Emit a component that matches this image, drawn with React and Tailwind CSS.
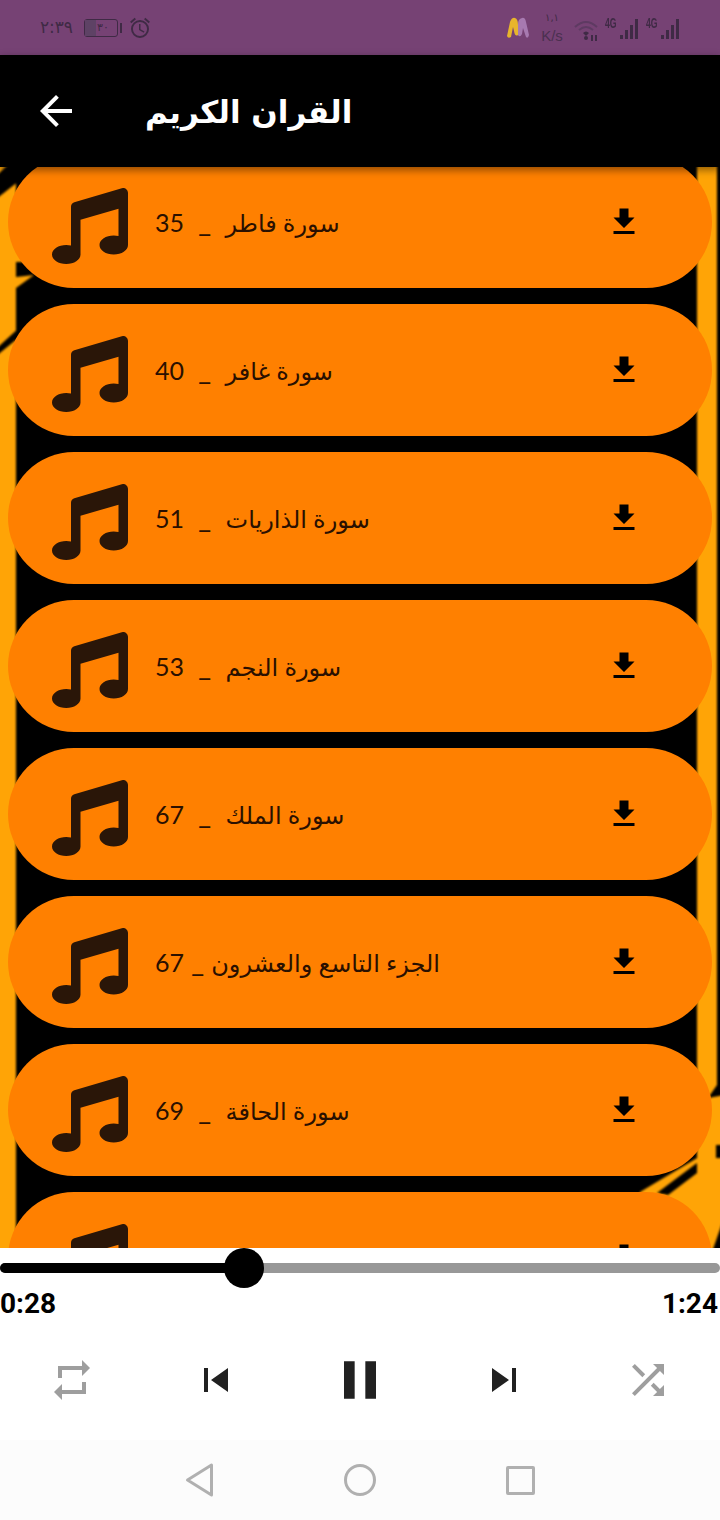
import React from "react";
import { FaMusic } from "react-icons/fa";
import { MdOutlineAlarm } from "react-icons/md";

const rows = [
  { name: "سورة فاطر", sep: "  _  ", num: "35" },
  { name: "سورة غافر", sep: "  _  ", num: "40" },
  { name: "سورة الذاريات", sep: "  _  ", num: "51" },
  { name: "سورة النجم", sep: "  _  ", num: "53" },
  { name: "سورة الملك", sep: "  _  ", num: "67" },
  { name: "الجزء التاسع والعشرون", sep: " _ ", num: "67" },
  { name: "سورة الحاقة", sep: "  _  ", num: "69" },
  {},
];

const Icon = ({ d, size = 48, className = "" }) => (
  <svg width={size} height={size} viewBox="0 0 24 24" fill="currentColor" className={className}>
    <path d={d} />
  </svg>
);

const Signal = () => (
  <div className="relative w-[33px] h-[22px]">
    <span className="absolute left-0 -top-[1px] text-[14px] leading-[14px] font-bold font-['Liberation_Sans',sans-serif] scale-x-[0.62] origin-left">4G</span>
    <div className="absolute right-0 bottom-0 flex items-end gap-[2px]">
      <div className="w-[3px] h-[4px] bg-[#3f2a45]" />
      <div className="w-[3px] h-[9px] bg-[#3f2a45]" />
      <div className="w-[3px] h-[14px] bg-[#3f2a45]" />
      <div className="w-[3px] h-[20px] bg-[#3f2a45]" />
    </div>
  </div>
);

const StatusBar = () => (
  <div className="h-[55px] shrink-0 bg-[#764274] flex items-center justify-between pl-[39px] pr-[41px] text-[#3f2a45]">
    <div className="flex items-center">
      <span dir="rtl" className="w-[34px] text-[17px] font-['DejaVu_Sans',sans-serif]">٢:٣٩</span>
      <div className="ml-[11px] flex items-center">
        <div className="relative w-[34px] h-[18px] rounded-[3px] border border-[#3f2a45] flex items-center justify-center pl-[4px]">
          <div className="absolute left-0 top-0 bottom-0 w-[11px] bg-[#5e4265]" />
          <span className="text-[11px] leading-none font-['DejaVu_Sans',sans-serif]">٣٠</span>
        </div>
        <div className="ml-[2px] w-[2px] h-[10px] bg-[#3f2a45]" />
      </div>
      <MdOutlineAlarm size={24} className="ml-[6px]" />
    </div>
    <div className="flex items-center">
      <svg width="24" height="24" viewBox="0 0 24 24">
        <path d="M1 20 L4 6 Q6 1 9 2 Q12 3 12 9 L12 19 Q9 21 8 15 L7 11 L5 21 Q2 23 1 20Z" fill="#e8b52c" />
        <path d="M12 8 Q12 3 16 2 Q19 1 20 6 L23 19 Q22 23 20 21 L17 12 L16 18 Q14 22 12 19Z" fill="#a77ab0" />
      </svg>
      <div className="ml-[10px] w-[24px] flex flex-col items-center font-['Liberation_Sans',sans-serif]">
        <span className="text-[10px] leading-[12px] font-['DejaVu_Sans',sans-serif]">١,١</span>
        <span className="mt-[4px] text-[15px] leading-[15px] text-[#4a3050]">K/s</span>
      </div>
      <svg width="26" height="22" viewBox="0 0 26 22" fill="none" className="ml-[10px] mt-[6px]">
        <path d="M1 7 Q12 -3 23 7" stroke="#5e3a62" strokeWidth="2" />
        <path d="M5 10 Q12 4 19 10" stroke="#5e3a62" strokeWidth="2" />
        <path d="M9 13 Q12 10 15 13 L12 16Z" fill="#3f2a45" />
        <circle cx="12" cy="18" r="2" fill="#3f2a45" />
        <path d="M18 15 v6 M22 15 v6" stroke="#3f2a45" strokeWidth="2" />
      </svg>
      <div className="ml-[5px]"><Signal /></div>
      <div className="ml-[8px]"><Signal /></div>
    </div>
  </div>
);

const Row = ({ row }) => (
  <div className="h-[132px] shrink-0 rounded-full bg-[#ff8000] flex items-center pl-[44px] pr-[70px]">
    <FaMusic size={76} className="text-[#2a1608] shrink-0 mt-[8px]" />
    <div className="ml-[28px] flex-1 flex justify-start">
      {row.name && (
        <span dir="rtl" className="mt-[2px] -ml-[1px] whitespace-pre text-[24px] text-[#2a1000] font-['Lato','DejaVu_Sans',sans-serif]">
          {row.name}
          <span className="text-[28px] leading-none">{row.sep}</span>
          <span className="text-[25px]">{row.num}</span>
        </span>
      )}
    </div>
    <Icon size={36} className="text-black shrink-0" d="M19 9h-4V3H9v6H5l7 7 7-7zM5 18v2h14v-2H5z" />
  </div>
);

const Background = () => (
  <svg width="728" height="1089" viewBox="-4 163 728 1089" className="absolute -left-[4px] -top-[4px] blur-[1px]">
    <rect x="-4" y="163" width="728" height="1089" fill="#000" />
    <path d="M-4 163H16V1252H-4Z" fill="#ffa406" />
    <path d="M-4 176L10 163H42L-4 199Z" fill="#000" />
    <path d="M16 195L42 175V262H16Z" fill="#ffa406" />
    <path d="M16 277L34 275L16 288Z" fill="#ffa406" />
    <path d="M-4 349L20 327L28 330L-4 356Z" fill="#000" />
    <path d="M697 163H717V1085L708 1098L724 1095V1218L712 1252H640V1192L697 1158Z" fill="#ffa406" />
    <path d="M657 1193L697 1163V1173L668 1195Z" fill="#000" />
    <path d="M716 1145H724V1158H716Z" fill="#000" />
  </svg>
);

const Controls = () => (
  <div className="h-[120px] grid grid-cols-5 place-items-center">
    <Icon size={48} className="text-[#9e9e9e]" d="M7 7h10v3l4-4-4-4v3H5v6h2V7zm10 10H7v-3l-4 4 4 4v-3h12v-6h-2v4z" />
    <Icon size={48} className="text-[#212121]" d="M6 6h2v12H6zm3.5 6l8.5 6V6z" />
    <Icon size={64} className="text-[#212121]" d="M6 19h4V5H6v14zm8-14v14h4V5h-4z" />
    <Icon size={48} className="text-[#212121]" d="M6 18l8.5-6L6 6v12zM16 6v12h2V6h-2z" />
    <Icon size={48} className="text-[#9e9e9e]" d="M10.59 9.17L5.41 4 4 5.41l5.17 5.17 1.42-1.41zM14.5 4l2.04 2.04L4 18.59 5.41 20 17.96 7.46 20 9.5V4h-5.5zm.33 9.41l-1.41 1.41 3.13 3.13L14.5 20H20v-5.5l-2.04 2.04-3.13-3.13z" />
  </div>
);

const Player = () => (
  <div className="shrink-0 bg-white">
    <div className="h-[40px] flex items-center">
      <div className="relative w-full h-[10px] rounded-full bg-[#989898]">
        <div className="h-full w-[244px] rounded-full bg-black" />
        <div className="absolute left-[224px] -top-[15px] w-[40px] h-[40px] rounded-full bg-black" />
      </div>
    </div>
    <div className="h-[32px] flex items-center justify-between pr-[2px] text-[28px] font-bold text-black font-['Roboto',sans-serif]">
      <span>0:28</span>
      <span>1:24</span>
    </div>
    <Controls />
  </div>
);

const NavBar = () => (
  <div className="h-[80px] shrink-0 bg-[#fcfcfc] grid grid-cols-[160px_160px_160px] justify-center place-items-center">
    <svg width="32" height="36" viewBox="0 0 32 36" fill="none" stroke="#b0b0b0" strokeWidth="3" strokeLinejoin="round">
      <path d="M27.5 3V33L3.5 18Z" />
    </svg>
    <div className="w-[32px] h-[32px] rounded-full border-[3px] border-[#b0b0b0]" />
    <div className="w-[29px] h-[29px] rounded-[2px] border-[3px] border-[#b0b0b0]" />
  </div>
);

export default function App() {
  return (
    <div className="w-[720px] h-[1520px] flex flex-col overflow-hidden bg-white">
      <StatusBar />
      <div className="relative z-10 h-[112px] shrink-0 bg-black flex items-center pl-[32px] shadow-[0_3px_8px_rgba(0,0,0,0.45)]">
        <Icon size={48} className="text-white" d="M20 11H7.83l5.59-5.59L12 4l-8 8 8 8 1.41-1.41L7.83 13H20v-2z" />
        <span className="ml-[65px] mt-[3px] text-[31px] font-bold text-white font-['DejaVu_Sans',sans-serif]">القران الكريم</span>
      </div>
      <div className="relative flex-1 overflow-hidden bg-black">
        <Background />
        <div className="relative -mt-[11px] px-[8px] flex flex-col gap-[16px]">
          {rows.map((r, i) => (
            <Row key={i} row={r} />
          ))}
        </div>
      </div>
      <Player />
      <NavBar />
    </div>
  );
}
